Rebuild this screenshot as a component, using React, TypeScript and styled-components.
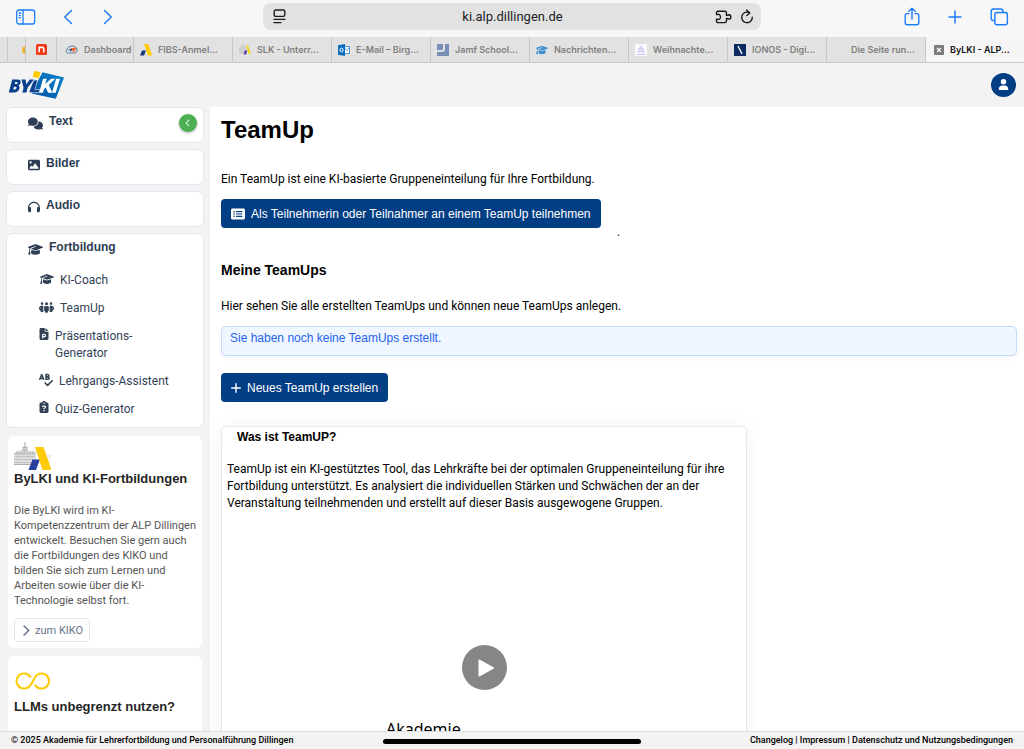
import React from 'react';
import styled, { createGlobalStyle } from 'styled-components';
import {
  FaChevronLeft,
  FaClipboardQuestion,
  FaComments,
  FaFilePowerpoint,
  FaGraduationCap,
  FaHeadphones,
  FaImage,
  FaPeopleGroup,
  FaRectangleList,
  FaSpellCheck,
  FaUser,
} from 'react-icons/fa6';

const ARIAL = '"Liberation Sans", Arial, sans-serif';
const ROBOTO = 'Roboto, "Open Sans", sans-serif';
const INTER = 'Inter, "Liberation Sans", sans-serif';

const GlobalStyle = createGlobalStyle`
  * { box-sizing: border-box; }
  body { margin: 0; background: #fff; color: #000; font-family: ${ROBOTO}; }
  h1, h2, h3, p, ul, figure { margin: 0; padding: 0; }
  button { font: inherit; cursor: pointer; }
  svg { display: block; flex: none; }
`;

const Shell = styled.div`
  height: 100vh;
  display: flex;
  flex-direction: column;
  overflow: hidden;
`;

/* ---------- browser chrome ---------- */

const Toolbar = styled.div`
  flex: none;
  display: grid;
  grid-template-columns: 1fr minmax(200px, 498px) 1fr;
  align-items: center;
  height: 37px;
  padding-bottom: 4px;
  background: #f7f7f7;
`;

const ToolGroup = styled.div<{ $end?: boolean }>`
  display: flex;
  align-items: center;
  gap: ${(p) => (p.$end ? 28 : 24)}px;
  padding: 0 15px;
  justify-content: ${(p) => (p.$end ? 'flex-end' : 'flex-start')};
`;

const ToolButton = styled.button`
  display: flex;
  padding: 0;
  border: 0;
  background: none;
  color: #1a7cf9;
`;

const AddressBar = styled.div`
  display: flex;
  align-items: center;
  gap: 8px;
  height: 27px;
  padding: 0 7px 0 10px;
  border-radius: 8px;
  background: #e2e2e3;
  color: #1c1c1e;
`;

const AddressInput = styled.input`
  flex: 1;
  min-width: 0;
  padding: 0 0 0 24px;
  border: 0;
  outline: 0;
  background: none;
  color: #1c1c1e;
  font: 13px ${ROBOTO};
  text-align: center;
`;

const TabStrip = styled.div`
  flex: none;
  display: flex;
  height: 26px;
  background: #e2e2e2;
  border-bottom: 1px solid #cacaca;
`;

const TabButton = styled.button<{ $width?: number; $active?: boolean; $pinned?: boolean }>`
  flex: ${(p) => (p.$width ? `0 0 ${p.$width}px` : '1 1 0')};
  display: flex;
  align-items: center;
  justify-content: ${(p) => (p.$pinned ? 'flex-end' : 'flex-start')};
  gap: 6px;
  min-width: 0;
  padding: ${(p) => (p.$pinned ? '0' : '0 0 0 6px')};
  overflow: hidden;
  border: 0;
  border-right: ${(p) => (p.$active ? 0 : 1)}px solid #c6c6c6;
  background: ${(p) => (p.$active ? '#f5f5f5' : 'transparent')};
  color: ${(p) => (p.$active ? '#111' : '#808080')};
  font: 600 9px ${INTER};
  text-align: left;
  white-space: nowrap;
`;

const TabIcon = styled.span<{ $wide?: boolean }>`
  flex: none;
  display: flex;
  justify-content: flex-end;
  width: ${(p) => (p.$wide ? 15 : 12)}px;
`;

/* ---------- application frame ---------- */

const AppHeader = styled.header`
  flex: none;
  display: flex;
  align-items: center;
  justify-content: space-between;
  height: 44px;
  padding: 0 8px 1px;
  background: #f3f3f3;
`;

const Avatar = styled.button`
  display: flex;
  align-items: center;
  justify-content: center;
  width: 25px;
  height: 24px;
  padding: 0;
  border: 0;
  border-radius: 50%;
  background: #023e84;
  color: #fff;
`;

const Body = styled.div`
  flex: 1;
  min-height: 0;
  display: flex;
  overflow: hidden;
`;

const Sidebar = styled.aside`
  flex: 0 0 210px;
  padding: 0 6px;
  background: #f3f3f3;
  overflow: hidden;
`;

const NavCard = styled.section`
  position: relative;
  min-height: 36px;
  margin-bottom: 6px;
  padding: 5px 21px 0;
  border: 1px solid #e2e8f0;
  border-radius: 6px;
  background: #fff;
`;

const NavTitle = styled.h3`
  display: flex;
  align-items: center;
  gap: 6px;
  height: 16px;
  color: #2d3e54;
  font: bold 12px/16px ${ARIAL};

  svg { margin: 2px 0 -2px; }
`;

const CollapseButton = styled.button`
  position: absolute;
  top: 6px;
  right: 6px;
  display: flex;
  align-items: center;
  justify-content: center;
  width: 18px;
  height: 18px;
  padding: 0;
  border: 0;
  border-radius: 50%;
  background: #4caf50;
  box-shadow: 0 1px 3px rgba(0, 0, 0, 0.3);
  color: #fff;
`;

const NavList = styled.ul`
  display: grid;
  gap: 11px;
  padding: 17px 11px 9px;
  list-style: none;
`;

const NavLink = styled.a`
  display: flex;
  gap: 6px;
  color: #334155;
  font: 12px/17px ${ROBOTO};
  text-decoration: none;
`;

const NavIcon = styled.span<{ $width: number }>`
  flex: none;
  display: flex;
  justify-content: center;
  align-items: flex-start;
  width: ${(p) => p.$width}px;
`;

const InfoCard = styled.section<{ $top: number }>`
  margin: 8px 2px 0;
  padding: ${(p) => p.$top}px 4px 6px 6px;
  border-radius: 6px;
  background: #fff;
`;

const InfoIcon = styled.div`
  padding: 0 0 9px 1px;
`;

const InfoTitle = styled.h3`
  margin-bottom: 16px;
  color: #262626;
  font: bold 13px/16px ${ARIAL};
  white-space: nowrap;
`;

const InfoText = styled.p`
  color: #555;
  font: 11px/15px ${ROBOTO};
`;

const OutlineButton = styled.button`
  display: flex;
  align-items: center;
  gap: 3px;
  height: 24px;
  margin-top: 10px;
  padding: 0 6px;
  border: 1px solid #dfe7f1;
  border-radius: 4px;
  background: #fff;
  color: #64748b;
  font: 11px ${ROBOTO};
`;

/* ---------- main column ---------- */

const Main = styled.main`
  flex: 1;
  min-width: 0;
  padding: 8px 7px 0 11px;
  overflow: hidden;
`;

const PageTitle = styled.h1`
  margin-bottom: 26px;
  font: bold 24px/30px ${ARIAL};
`;

const SectionTitle = styled.h2`
  margin-bottom: 19px;
  font: bold 14px/18px ${ARIAL};
`;

const Text = styled.p`
  margin-bottom: 12px;
  font: 12px/16px ${ROBOTO};
`;

const PrimaryButton = styled.button`
  display: flex;
  align-items: center;
  gap: 6px;
  height: 29px;
  padding: 0 10px;
  border: 0;
  border-radius: 4px;
  background: #023e84;
  color: #fff;
  font: 12px ${ARIAL};
`;

const Dot = styled.p`
  margin-bottom: 25px;
  padding-left: 396px;
  font: 12px/8px ${ROBOTO};
`;

const Notice = styled.div`
  min-height: 30px;
  margin-bottom: 17px;
  padding: 3px 8px;
  border: 1px solid #bfdbfe;
  border-radius: 5px;
  background: #eff6ff;
  box-shadow: 0 2px 6px rgba(0, 0, 0, 0.04);
  color: #2563eb;
  font: 12px/16px ${ARIAL};
`;

const Panel = styled.article`
  max-width: 526px;
  margin-top: 24px;
  padding: 2px 5px;
  border: 1px solid #e5e7eb;
  border-radius: 5px;
  background: #fff;
  box-shadow: 0 0 20px rgba(0, 0, 0, 0.05);
`;

const PanelTitle = styled.h3`
  padding-left: 10px;
  font: bold 12px/16px ${ARIAL};
`;

const PanelText = styled.p`
  margin-top: 16px;
  font: 12px/17px ${ROBOTO};
`;

const Video = styled.figure`
  display: grid;
  justify-items: center;
  gap: 28px;
  padding: 133px 0 60px;
`;

const PlayButton = styled.button`
  display: flex;
  align-items: center;
  justify-content: center;
  width: 45px;
  height: 45px;
  padding: 0;
  border: 0;
  border-radius: 50%;
  background: #868686;
`;

const VideoCaption = styled.figcaption`
  justify-self: start;
  padding-left: 159px;
  font: 16px/22px "Noto Sans", sans-serif;
`;

const Footer = styled.footer`
  position: relative;
  flex: none;
  display: flex;
  align-items: center;
  justify-content: space-between;
  height: 18px;
  padding: 0 11px 1px;
  border-top: 1px solid #ddd;
  background: #f3f3f3;
  font: 500 9px ${ROBOTO};

  a { color: inherit; text-decoration: none; }
`;

const HomeIndicator = styled.div`
  position: absolute;
  left: 50%;
  bottom: 5px;
  width: 258px;
  height: 5px;
  border-radius: 3px;
  background: #000;
  transform: translateX(-50%);
`;

/* ---------- drawings ---------- */

const line = { fill: 'none', stroke: 'currentColor', strokeLinecap: 'round', strokeLinejoin: 'round' } as const;

const SidebarIcon = () => (
  <svg width="21" height="16" viewBox="0 0 21 16" {...line} strokeWidth="1.3">
    <rect x="1.7" y="1" width="18" height="14" rx="2.2" />
    <path d="M8 1v14M4.200 4h1.3M4.200 6.3h1.3M4.200 8.6h1.3" />
  </svg>
);
const ChevronIcon = ({ right, size = 16 }: { right?: boolean; size?: number }) => (
  <svg width={size} height={size} viewBox="0 0 16 16" {...line} strokeWidth={size < 12 ? 2.2 : 1.5}>
    <path d={right ? 'M4.500 1.500L11.200 8l-6.700 6.500' : 'M11.500 1.500L4.800 8l6.700 6.500'} />
  </svg>
);
const ReaderIcon = () => (
  <svg width="13" height="15" viewBox="0 0 13 15" {...line} strokeWidth="1.4">
    <rect x="1.2" y="1" width="10.6" height="6.4" rx="1.6" />
    <path d="M1 10.4h11M1 13.6h7" />
  </svg>
);
const PuzzleIcon = () => (
  <svg width="17" height="14" viewBox="0 0 17 14" {...line} strokeWidth="1.4">
    <path d="M1.500 4.600V2.700Q1.500 1.300 2.900 1.300H10Q11.400 1.300 11.400 2.700V5.300H12.600Q13 4.700 14 4.700Q15.800 4.800 15.800 6.900Q15.800 9 14 9.100Q13 9.100 12.600 8.500H11.400V11.200Q11.400 12.600 10 12.600H2.900Q1.500 12.600 1.500 11.200V9.200H2.600Q3.200 9.700 4 9.400Q5.600 8.800 5.500 6.900Q5.400 5 4 4.400Q3.200 4.100 2.600 4.600z" />
  </svg>
);
const ReloadIcon = () => (
  <svg width="14" height="15" viewBox="0 0 14 15" {...line} strokeWidth="1.4">
    <path d="M9.600 3.800A5.300 5.300 0 1 0 12.300 8.300M6.600 1l3.200 2.900-3 2.700" />
  </svg>
);
const ShareIcon = () => (
  <svg width="16" height="19" viewBox="0 0 16 19" {...line} strokeWidth="1.4">
    <path d="M5 6.6H3.2Q1.2 6.6 1.2 8.6V15.8Q1.2 17.8 3.2 17.8H12.8Q14.8 17.8 14.8 15.8V8.6Q14.8 6.6 12.8 6.6H11M8 12V1.2M4.8 4.2L8 1.2l3.2 3" />
  </svg>
);
const PlusIcon = ({ size }: { size: number }) => (
  <svg width={size} height={size} viewBox="0 0 14 14" {...line} strokeWidth={size < 12 ? 2 : 1.5}>
    <path d="M7 1v12M1 7h12" />
  </svg>
);
const TabsIcon = () => (
  <svg width="19" height="18" viewBox="0 0 19 18" {...line} strokeWidth="1.4">
    <path d="M4.6 12.6H3.5Q1.2 12.6 1.2 10.3V3.3Q1.2 1 3.5 1H10.7Q13 1 13 3.3V4.4" />
    <rect x="4.8" y="4.5" width="12.6" height="12.3" rx="2.3" />
  </svg>
);

const ByLkiLogo = () => (
  <svg width="57" height="30" viewBox="0 0 57 30" role="img" aria-label="ByLKI">
    <defs>
      <linearGradient id="logoBlue" x1="0" y1="1" x2="1" y2="0">
        <stop offset="0" stopColor="#00529f" />
        <stop offset="1" stopColor="#0a84cf" />
      </linearGradient>
    </defs>
    <path d="M34.500 2.200L56 7.500 47.800 28.800 23.500 23.500z" fill="url(#logoBlue)" />
    <path d="M26.500.8l6 1.4-1.7 6-6.2-1.4z" fill="#ffcc00" />
    <path d="M.8 22.5L4.2 9.500H9.800Q13.600 9.800 12.400 13.200 11.800 15 10.400 15.600 12.300 16.600 11.300 19 10 22.4 6.2 22.5z" fill="#0a3f8c" />
    <path d="M7.300 12h1.600q1.200.3.6 1.400-.3.700-1.300.7H6.700zM6 16.700h1.800q1.200.3.6 1.600-.5 1.200-1.700 1.200H5.200z" fill="#f3f3f3" />
    <path d="M13.500 9.500h4l1 4.700 3.200-4.700h4.200l-6.300 8.200-1.200 4.800h-4l1.200-4.800z" fill="#0a3f8c" />
    <path d="M26 10h3.800l-3 9.600h5.200l-1 3H20.800L24 14z" fill="#0a3f8c" stroke="#f3f3f3" strokeWidth=".6" />
    <path d="M35 8.800h3.800l-1.600 5.300 5.700-5.300h4.500l-6.600 6.200 3.500 7.800h-4.200l-2.400-5.400-1.600 1.500-1.200 3.900h-3.800zM48.200 8.800H52l-4.300 14h-3.800z" fill="#fff" />
  </svg>
);

const AcademyLogo = () => (
  <svg width="37" height="29" viewBox="0 0 37 29" role="img" aria-label="ALP Dillingen">
    <path d="M0 12l2-3 6-1 .5-3 2-1.500L11 0l.5 3.500 2 1.500.5 4h8v14H0z" fill="#e6e6e6" />
    <path d="M11 0v5M8.500 5.500h5M8 8.500h6M0 12h22M0 22.500h19" fill="none" stroke="#8c8c8c" strokeWidth=".6" />
    <path d="M.5 14.500H21M.5 17.500H20M.5 20.500H18" fill="none" stroke="#8c8c8c" strokeWidth="1.500" strokeDasharray=".8 1.200" />
    <path d="M9 7h4.500M2 10.500h18" fill="none" stroke="#999" strokeWidth="1.400" strokeDasharray=".7 .9" />
    <path d="M29 14h8M30 16.500h6M31 19.500h5" fill="none" stroke="#b5b5b5" strokeWidth="1.200" strokeDasharray=".8 1" />
    <path d="M18.500 17.500h7.500L22 28h-7.500z" fill="#253f9b" />
    <path d="M21 5h8.500l8 23h-9z" fill="#ffcb08" />
  </svg>
);

const InfinityIcon = () => (
  <svg width="36" height="18" viewBox="0 0 36 18" fill="none" stroke="#ffcb08" strokeWidth="2.1" strokeLinecap="round">
    <path d="M15.300 4.800A7.500 7.500 0 1 0 9.500 16.500C13.500 16.500 15.500 14 17.800 9.500C20 5 21.500 1.500 26.500 1.500A7.500 7.500 0 1 1 20.300 13.300" />
  </svg>
);

const favicon = {
  chrome: (
    <svg width="3" height="8" viewBox="0 0 3 8"><path d="M3 0v8Q0 7 0 4T3 0z" fill="#f6b21b" /><path d="M3 2.500v3Q2 4 3 2.500z" fill="#4285f4" /></svg>
  ),
  red: (
    <svg width="11" height="11" viewBox="0 0 11 11"><rect width="11" height="11" rx="1.500" fill="#f03a17" /><path d="M3.200 8.300V3.400H6.200Q7.800 3.400 7.800 5V8.300" fill="none" stroke="#fff" strokeWidth="1.600" /></svg>
  ),
  cloud: (
    <svg width="13" height="9" viewBox="0 0 13 9"><path d="M2.500 8Q0 7 1.500 5 3 1 7 1t5 3q1 3-2 4z" fill="#dfe6ee" stroke="#56708f" strokeWidth=".9" /><path d="M5 3.500l6.500-1L9 7.500z" fill="#ef6a32" /><path d="M3 5l4-1.500-.5 3z" fill="#31567f" /></svg>
  ),
  fibs: (
    <svg width="12" height="12" viewBox="0 0 12 12"><path d="M4 0h4.500L12 11.500H8z" fill="#ffcb08" /><path d="M2 6.500h4L4 11.500H0z" fill="#153a7b" /></svg>
  ),
  slk: (
    <svg width="12" height="11" viewBox="0 0 12 11"><path d="M0 4l4-4 3 2v8H0z" fill="#cfcfcf" /><path d="M7 1.500h2.300L12 10H9.500z" fill="#f0d723" /><path d="M5.800 6.500h2.500L7 10.500H4.800z" fill="#4a34a6" /></svg>
  ),
  mail: (
    <svg width="12" height="12" viewBox="0 0 12 12"><path d="M6 2.500h5.500v7H6z" fill="#fff" stroke="#2a82ca" strokeWidth=".8" /><path d="M6.500 4l2.500 2.500L11.500 3.500" fill="none" stroke="#2a82ca" strokeWidth=".8" /><path d="M0 1.200L7 0v12L0 10.800z" fill="#0b6cbd" /><ellipse cx="3.500" cy="6" rx="1.500" ry="2" fill="none" stroke="#fff" strokeWidth="1" /></svg>
  ),
  jamf: (
    <svg width="12" height="12" viewBox="0 0 12 12"><path d="M0 0h6v4.500Q6 6 4.500 6H0zM8 0h4v12H0V8h5q3 0 3-3z" fill="#7890b5" /></svg>
  ),
  hat: <FaGraduationCap size={12} color="#3f8fd0" />,
  tree: (
    <svg width="12" height="12" viewBox="0 0 12 12"><rect width="12" height="12" fill="#fafaff" /><path d="M6 1.500v3M4 4h4v2H4zM2.500 8h7M1.500 10.500h9M4 6L3 8.500M8 6l1 2.500" fill="none" stroke="#c5bdf5" strokeWidth=".9" /></svg>
  ),
  ionos: (
    <svg width="12" height="12" viewBox="0 0 12 12"><rect width="12" height="12" fill="#0b2a63" /><path d="M4 2l4 8" stroke="#fff" strokeWidth="1.400" /></svg>
  ),
  close: (
    <svg width="10" height="10" viewBox="0 0 9 9"><rect width="9" height="9" rx="1" fill="#7b7b7b" /><path d="M2.700 2.700l3.600 3.600M6.300 2.700L2.700 6.300" stroke="#fff" strokeWidth="1" /></svg>
  ),
};

const tabs: { label: string; icon?: React.ReactNode; active?: boolean }[] = [
  { label: 'FIBS-Anmel...', icon: favicon.fibs },
  { label: 'SLK - Unterr...', icon: favicon.slk },
  { label: 'E-Mail – Birg...', icon: favicon.mail },
  { label: 'Jamf School...', icon: favicon.jamf },
  { label: 'Nachrichten...', icon: favicon.hat },
  { label: 'Weihnachte...', icon: favicon.tree },
  { label: 'IONOS - Digi...', icon: favicon.ionos },
  { label: 'Die Seite run...' },
  { label: 'ByLKI - ALP...', icon: favicon.close, active: true },
];

const courses = [
  { label: 'KI-Coach', width: 15, icon: <FaGraduationCap size={14} /> },
  { label: 'TeamUp', width: 15, icon: <FaPeopleGroup size={15} /> },
  { label: 'Präsentations-Generator', width: 10, icon: <FaFilePowerpoint size={12} /> },
  { label: 'Lehrgangs-Assistent', width: 14, icon: <FaSpellCheck size={14} /> },
  { label: 'Quiz-Generator', width: 10, icon: <FaClipboardQuestion size={12} /> },
];

export default function App() {
  return (
    <Shell>
      <GlobalStyle />
      <Toolbar>
        <ToolGroup>
          <ToolButton aria-label="Seitenleiste"><SidebarIcon /></ToolButton>
          <ToolButton aria-label="Zurück"><ChevronIcon /></ToolButton>
          <ToolButton aria-label="Vorwärts"><ChevronIcon right /></ToolButton>
        </ToolGroup>
        <AddressBar>
          <ReaderIcon />
          <AddressInput aria-label="Adresse" defaultValue="ki.alp.dillingen.de" />
          <PuzzleIcon />
          <ReloadIcon />
        </AddressBar>
        <ToolGroup $end>
          <ToolButton aria-label="Teilen"><ShareIcon /></ToolButton>
          <ToolButton aria-label="Neuer Tab"><PlusIcon size={14} /></ToolButton>
          <ToolButton aria-label="Tabübersicht"><TabsIcon /></ToolButton>
        </ToolGroup>
      </Toolbar>
      <TabStrip>
        <TabButton $width={8} $pinned aria-label="Tab" />
        <TabButton $width={18} $pinned aria-label="Tab">{favicon.chrome}</TabButton>
        <TabButton $width={31} aria-label="Tab"><TabIcon $wide>{favicon.red}</TabIcon></TabButton>
        <TabButton $width={77}><TabIcon $wide>{favicon.cloud}</TabIcon>Dashboard</TabButton>
        {tabs.map((t) => (
          <TabButton key={t.label} $active={t.active}>
            <TabIcon>{t.icon}</TabIcon>
            {t.label}
          </TabButton>
        ))}
      </TabStrip>

      <AppHeader>
        <ByLkiLogo />
        <Avatar aria-label="Konto"><FaUser size={11} /></Avatar>
      </AppHeader>

      <Body>
        <Sidebar>
          <nav>
            <NavCard>
              <NavTitle><FaComments size={15} />Text</NavTitle>
              <CollapseButton aria-label="Menü einklappen"><FaChevronLeft size={8} /></CollapseButton>
            </NavCard>
            <NavCard><NavTitle><FaImage size={12} />Bilder</NavTitle></NavCard>
            <NavCard><NavTitle><FaHeadphones size={12} />Audio</NavTitle></NavCard>
            <NavCard>
              <NavTitle><FaGraduationCap size={15} />Fortbildung</NavTitle>
              <NavList>
                {courses.map((c) => (
                  <li key={c.label}>
                    <NavLink href="#"><NavIcon $width={c.width}>{c.icon}</NavIcon>{c.label}</NavLink>
                  </li>
                ))}
              </NavList>
            </NavCard>
          </nav>
          <InfoCard $top={6}>
            <AcademyLogo />
            <InfoTitle>ByLKI und KI-Fortbildungen</InfoTitle>
            <InfoText>
              Die ByLKI wird im KI-Kompetenzzentrum der ALP Dillingen entwickelt. Besuchen Sie gern auch die
              Fortbildungen des KIKO und bilden Sie sich zum Lernen und Arbeiten sowie über die KI-Technologie selbst
              fort.
            </InfoText>
            <OutlineButton><ChevronIcon right size={11} />zum KIKO</OutlineButton>
          </InfoCard>
          <InfoCard $top={16}>
            <InfoIcon><InfinityIcon /></InfoIcon>
            <InfoTitle>LLMs unbegrenzt nutzen?</InfoTitle>
          </InfoCard>
        </Sidebar>

        <Main>
          <PageTitle>TeamUp</PageTitle>
          <Text>Ein TeamUp ist eine KI-basierte Gruppeneinteilung für Ihre Fortbildung.</Text>
          <PrimaryButton>
            <FaRectangleList size={14} />
            Als Teilnehmerin oder Teilnahmer an einem TeamUp teilnehmen
          </PrimaryButton>
          <Dot>.</Dot>
          <SectionTitle>Meine TeamUps</SectionTitle>
          <Text>Hier sehen Sie alle erstellten TeamUps und können neue TeamUps anlegen.</Text>
          <Notice>Sie haben noch keine TeamUps erstellt.</Notice>
          <PrimaryButton>
            <PlusIcon size={10} />
            Neues TeamUp erstellen
          </PrimaryButton>
          <Panel>
            <PanelTitle>Was ist TeamUP?</PanelTitle>
            <PanelText>
              TeamUp ist ein KI-gestütztes Tool, das Lehrkräfte bei der optimalen Gruppeneinteilung für ihre
              Fortbildung unterstützt. Es analysiert die individuellen Stärken und Schwächen der an der Veranstaltung
              teilnehmenden und erstellt auf dieser Basis ausgewogene Gruppen.
            </PanelText>
            <Video>
              <PlayButton aria-label="Video abspielen">
                <svg width="20" height="20" viewBox="0 0 20 20" fill="#fff" stroke="#fff" strokeWidth="2" strokeLinejoin="round">
                  <path d="M5.500 2.500v15L19 10z" />
                </svg>
              </PlayButton>
              <VideoCaption>Akademie</VideoCaption>
            </Video>
          </Panel>
        </Main>
      </Body>

      <Footer>
        <span>© 2025 Akademie für Lehrerfortbildung und Personalführung Dillingen</span>
        <span>
          <a href="#">Changelog</a> | <a href="#">Impressum</a> | <a href="#">Datenschutz und Nutzungsbedingungen</a>
        </span>
        <HomeIndicator />
      </Footer>
    </Shell>
  );
}
